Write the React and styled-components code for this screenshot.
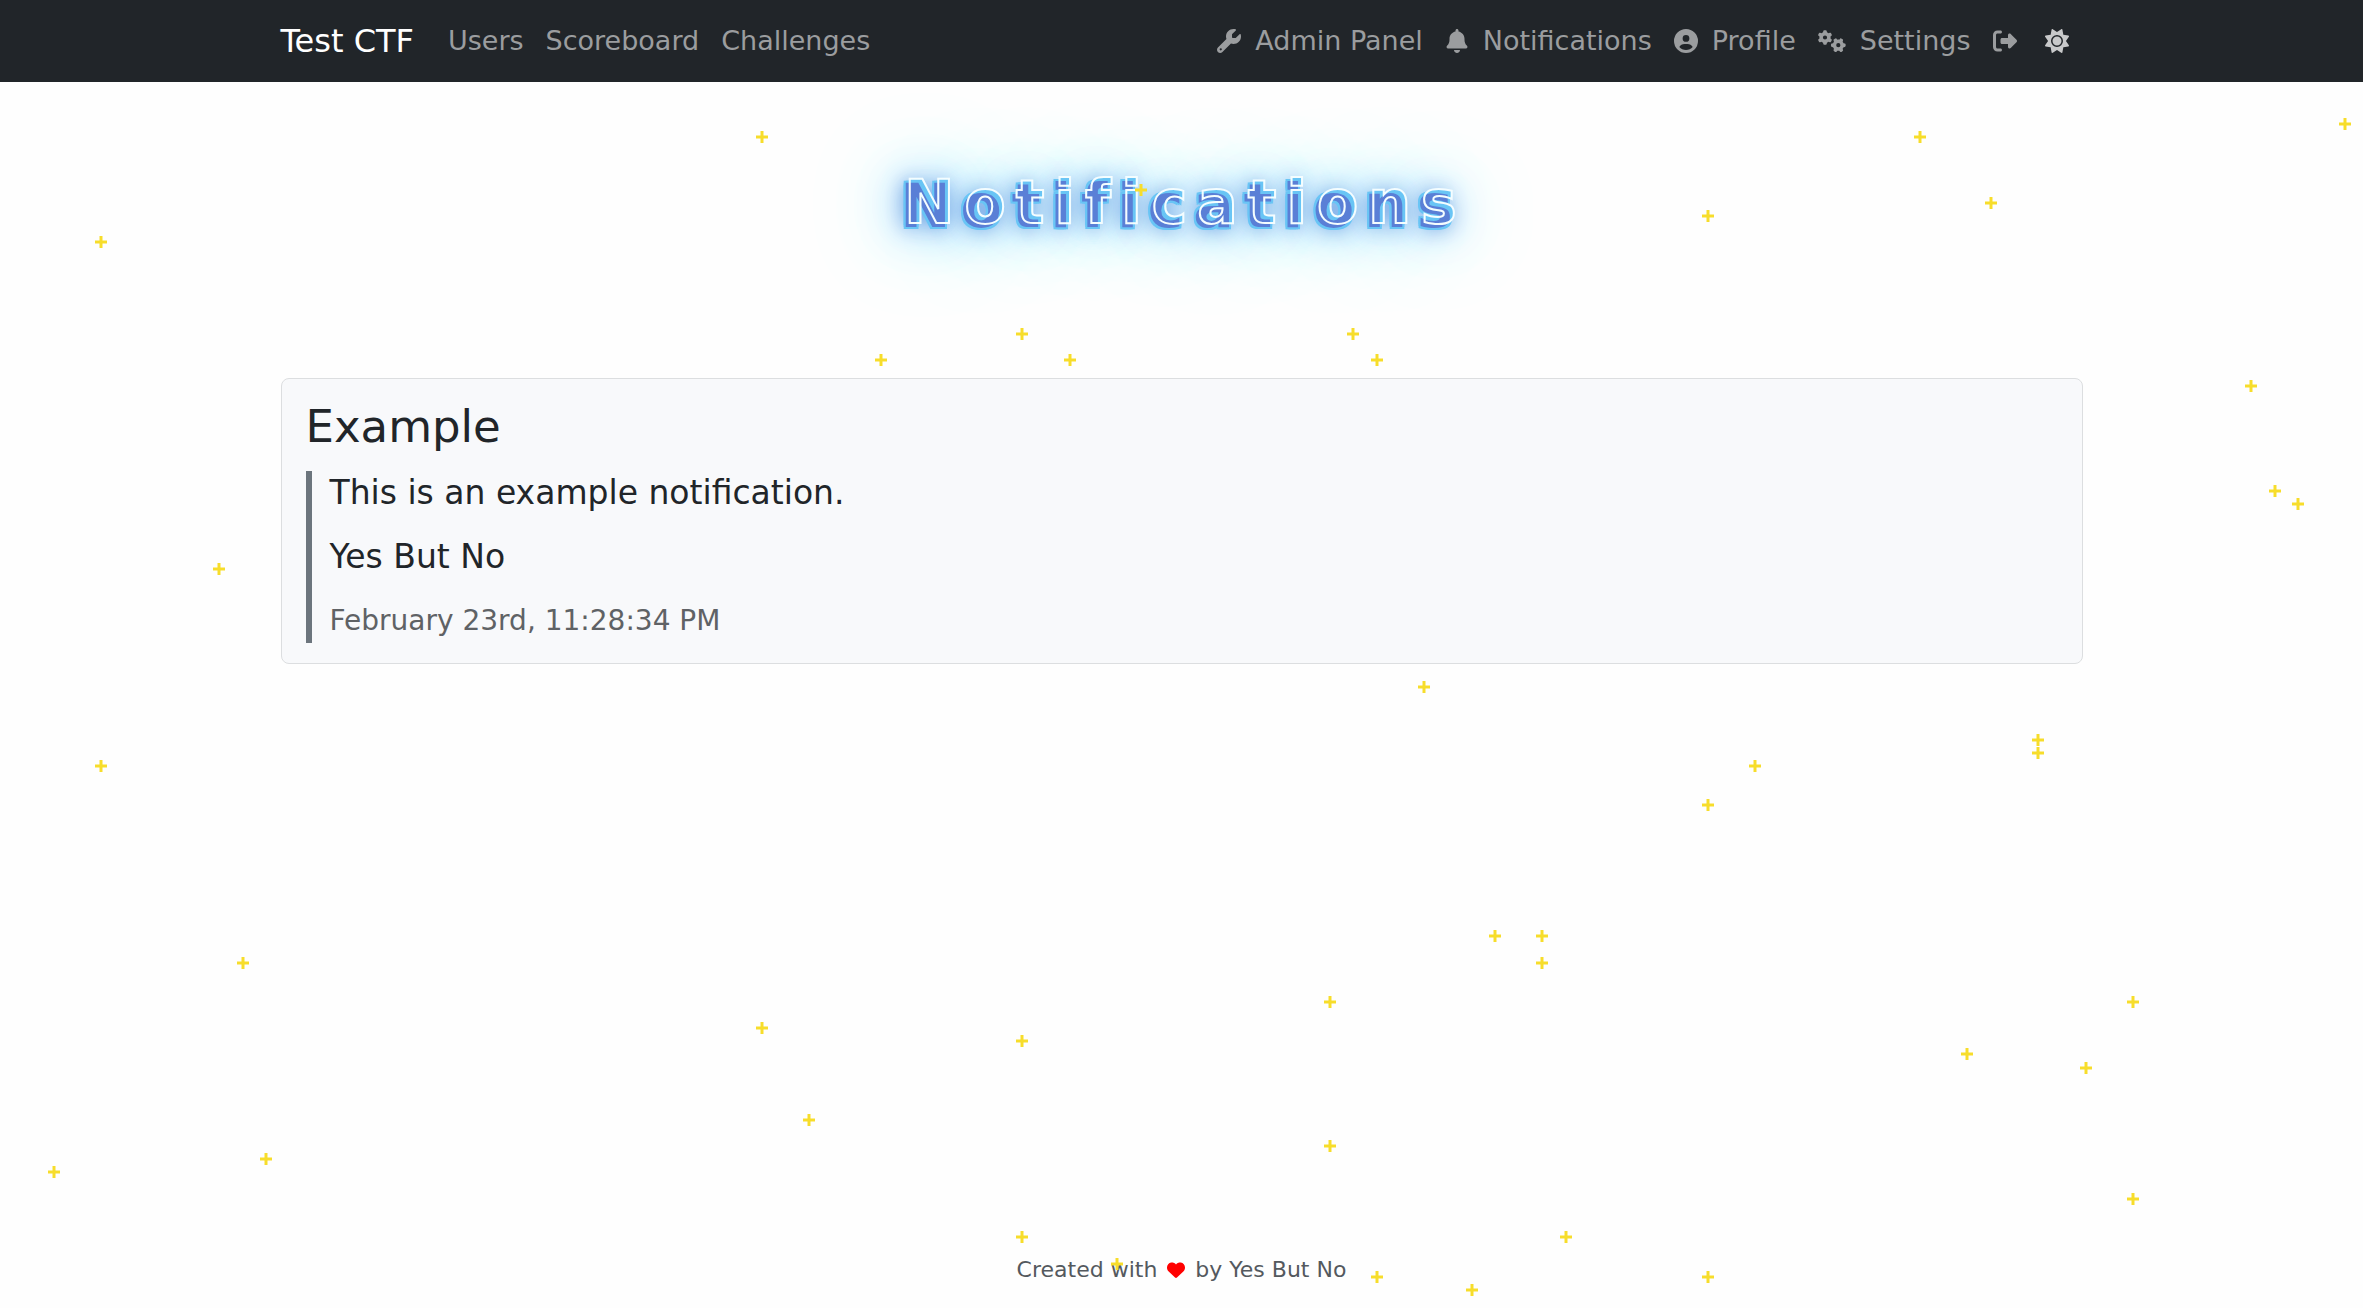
import React from "react";
import styled, { createGlobalStyle } from "styled-components";
import { FaWrench, FaBell, FaCircleUser, FaGears, FaRightFromBracket, FaHeart, FaSun } from "react-icons/fa6";

const GlobalStyle = createGlobalStyle`
  * { box-sizing: border-box; }
  body {
    margin: 0;
    background: #fefefe;
    color: #212529;
    font-family: "DejaVu Sans", sans-serif;
    font-size: 33px;
    line-height: 44px;
  }
  h1, h2, p { margin: 0; font-weight: 400; }
`;

const Page = styled.div`
  position: relative;
  display: flex;
  flex-direction: column;
  min-height: 100vh;
  overflow: hidden;
`;

const Container = styled.div`
  width: 100%;
  max-width: 1842px;
  margin: 0 auto;
  padding: 0 20px;
`;

const Header = styled.header`
  background: #212529;
`;

const Bar = styled(Container)`
  display: flex;
  align-items: center;
  justify-content: space-between;
  height: 82px;
`;

const Group = styled.nav`
  display: flex;
  align-items: center;
  gap: 22px;
`;

const Brand = styled.a`
  margin-right: 12px;
  color: #fff;
  font-size: 32px;
  text-decoration: none;
  white-space: nowrap;
`;

const NavLink = styled.a`
  display: flex;
  align-items: center;
  gap: 14px;
  color: #9b9d9f;
  font-size: 27px;
  text-decoration: none;
  white-space: nowrap;
`;

const ThemeButton = styled.button`
  display: flex;
  margin: 0 14px 0 6px;
  padding: 0;
  border: 0;
  background: none;
  color: #c8c9ca;
`;

const Hero = styled.div`
  display: flex;
  justify-content: center;
  padding: 84px 0 132px;
`;

const Title = styled.h1`
  position: relative;
  color: #5a7fd6;
  font-size: 60px;
  font-weight: 700;
  line-height: 80px;
  letter-spacing: 10px;
  text-shadow: 2px 0 0 #69c5f5, -2px 0 0 #69c5f5, 0 2px 0 #69c5f5, 0 -2px 0 #69c5f5,
    2px -2px 0 #69c5f5, -2px 2px 0 #69c5f5, 2px 2px 0 #69c5f5, -2px -2px 0 #69c5f5,
    4px -4px 0 #69c5f5, 0 0 20px #5a8fdc, 0 0 40px #7fbcf5,
    0 0 70px #8fdcff, 0 0 100px #a0f0ff;

  &::after {
    content: "Notifications" / "";
    position: absolute;
    left: 4px;
    top: -4px;
    color: transparent;
    text-shadow: none;
    -webkit-text-stroke: 2px #f4fdff;
  }
`;

const Card = styled.article`
  padding: 24px 24px 20px;
  border: 1px solid #dcdee0;
  border-radius: 8px;
  background: #f8f9fb;
`;

const CardTitle = styled.h2`
  margin-bottom: 20px;
  font-size: 45px;
  line-height: 48px;
`;

const Quote = styled.blockquote`
  display: flex;
  flex-direction: column;
  gap: 20px;
  margin: 0;
  padding-left: 18px;
  border-left: 6px solid #6c757d;
`;

const Time = styled.time`
  color: #5f6265;
  font-size: 28px;
`;

const Footer = styled.footer`
  display: flex;
  align-items: center;
  justify-content: center;
  gap: 10px;
  margin-top: auto;
  padding-bottom: 16px;
  color: #54595e;
  font-size: 22px;
`;

const Sky = styled.svg`
  position: absolute;
  inset: 0;
  width: 100%;
  height: 100%;
  pointer-events: none;
`;

const stars = [
  [762, 137], [1920, 137], [2345, 124], [1991, 203], [1708, 216], [101, 242], [1141, 190],
  [1022, 334], [1353, 334], [881, 360], [1070, 360], [1377, 360], [2251, 386], [2275, 491],
  [2298, 504], [219, 569], [1424, 687], [101, 766], [1755, 766], [2038, 740], [2038, 753],
  [1708, 805], [1495, 936], [1542, 936], [1542, 963], [243, 963], [1330, 1002], [2133, 1002],
  [762, 1028], [1022, 1041], [1967, 1054], [2086, 1068], [809, 1120], [1330, 1146],
  [266, 1159], [54, 1172], [2133, 1199], [1022, 1237], [1566, 1237], [1117, 1264],
  [1377, 1277], [1708, 1277], [1472, 1290],
];

export default function App() {
  return (
    <Page>
      <GlobalStyle />
      <Header>
        <Bar>
          <Group aria-label="Main">
            <Brand href="#home">Test CTF</Brand>
            <NavLink href="#users">Users</NavLink>
            <NavLink href="#scoreboard">Scoreboard</NavLink>
            <NavLink href="#challenges">Challenges</NavLink>
          </Group>
          <Group aria-label="Account">
            <NavLink href="#admin"><FaWrench size={24} />Admin Panel</NavLink>
            <NavLink href="#notifications"><FaBell size={24} />Notifications</NavLink>
            <NavLink href="#profile"><FaCircleUser size={24} />Profile</NavLink>
            <NavLink href="#settings"><FaGears size={28} />Settings</NavLink>
            <NavLink href="#logout" aria-label="Log out"><FaRightFromBracket size={24} /></NavLink>
            <ThemeButton type="button" aria-label="Toggle theme"><FaSun size={24} /></ThemeButton>
          </Group>
        </Bar>
      </Header>
      <Hero><Title>Notifications</Title></Hero>
      <Container as="main">
        <Card>
          <CardTitle>Example</CardTitle>
          <Quote>
            <p>This is an example notification.</p>
            <p>Yes But No</p>
            <Time>February 23rd, 11:28:34 PM</Time>
          </Quote>
        </Card>
      </Container>
      <Footer>Created with <FaHeart color="#ff0000" size={18} /> by Yes But No</Footer>
      <Sky aria-hidden="true">
        {stars.map(([x, y]) => (
          <path key={`${x}-${y}`} d={`M${x - 6} ${y}h12M${x} ${y - 6}v12`} stroke="#f7dd2b" strokeWidth="3" />
        ))}
      </Sky>
    </Page>
  );
}
